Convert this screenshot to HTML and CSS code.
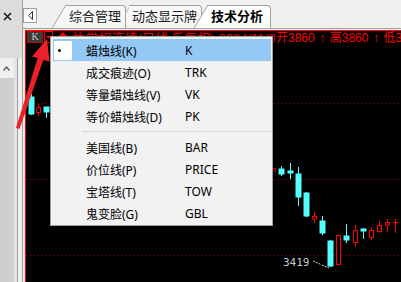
FILE: index.html
```html
<!DOCTYPE html>
<html lang="zh-CN">
<head>
    <meta charset="UTF-8">
    <title>技术分析</title>
    <link rel="stylesheet" href="styles.css">
</head>
<body>
    <div class="app">
        <aside class="side">
            <div class="side-head">
                <svg class="close-icon" width="9" height="9" viewBox="0 0 9 9"><path d="M1 1 L8 8 M8 1 L1 8" stroke="#1e1e1e" stroke-width="1.6"/></svg>
            </div>
            <div class="side-body">
                <div class="scroll">
                    <div class="scroll-btn">
                        <svg width="7" height="5" viewBox="0 0 7 5"><path d="M0.5 4.5 L3.5 1 L6.5 4.5" fill="none" stroke="#555" stroke-width="1.2"/></svg>
                    </div>
                    <div class="scroll-track"></div>
                </div>
                <div class="side-strip"></div>
                <div class="side-pad"></div>
            </div>
        </aside>

        <div class="main">
            <div class="tabbar">
                <div class="nav-btn">
                    <svg width="5" height="9" viewBox="0 0 5 9"><path d="M4.5 0.5 L0.7 4.5 L4.5 8.5 Z" fill="none" stroke="#333"/></svg>
                </div>
                <div class="tabs">
                    <div class="tab tab-first">
                        <svg class="slant" width="14" height="23" viewBox="0 0 14 23"><path d="M0 23 L14 0 L14 23 Z" fill="#f8f8f8"/><path d="M0 23 L14 0" stroke="#a0a0a0"/></svg>
                        <span class="tab-label">综合管理</span>
                    </div>
                    <div class="tab tab-second">
                        <svg class="slant" width="14" height="23" viewBox="0 0 14 23"><path d="M0 23 L14 0 L14 23 Z" fill="#f8f8f8"/><path d="M0 23 L14 0" stroke="#a0a0a0"/></svg>
                        <span class="tab-label">动态显示牌</span>
                    </div>
                    <div class="tab tab-active">
                        <svg class="slant" width="14" height="23" viewBox="0 0 14 23"><path d="M0 23 L14 0 L14 23 Z" fill="#fff"/><path d="M0 23 L14 0" stroke="#a0a0a0"/></svg>
                        <span class="tab-label">技术分析</span>
                    </div>
                </div>
            </div>

            <div class="chart">
                <div class="chart-head">
                    <span class="kbox">K</span>
                    <span class="drop">
                        <svg width="5" height="3" viewBox="0 0 5 3"><path d="M0 0 L5 0 L2.5 3 Z" fill="#f00"/></svg>
                    </span>
                    <span class="title">◆ 执常规连续(日线,后复权) 2024/11/05</span>
                    <span class="quote">开3860<i class="up">↑</i>高3860<i class="up">↑</i>低3860<i class="up">↑</i></span>
                </div>
                <svg class="plot" width="375" height="237" viewBox="0 0 375 237">
                    <g stroke="#b00000" stroke-dasharray="1 3">
                        <line x1="0" y1="58.5" x2="375" y2="58.5"/>
                        <line x1="0" y1="134.5" x2="375" y2="134.5"/>
                        <line x1="0" y1="210.5" x2="375" y2="210.5"/>
                    </g>
                    <!-- left side -->
                    <g stroke="#54ffff" fill="#54ffff">
                        <line x1="5.5" y1="49" x2="5.5" y2="70"/>
                        <rect x="3" y="52" width="5" height="17"/>
                        <line x1="20.5" y1="62" x2="20.5" y2="73"/>
                        <rect x="18" y="62" width="5" height="5"/>
                    </g>
                    <g stroke="#f00" fill="none">
                        <line x1="12.5" y1="59" x2="12.5" y2="71"/>
                        <rect x="10.5" y="62.5" width="4" height="5" fill="#000"/>
                    </g>
                    <!-- right side, falling -->
                    <g stroke="#54ffff" fill="#54ffff">
                        <line x1="255.5" y1="121" x2="255.5" y2="131"/>
                        <rect x="253" y="124" width="5" height="5"/>
                        <line x1="264.5" y1="118" x2="264.5" y2="134"/>
                        <rect x="262" y="126" width="5" height="2"/>
                        <line x1="272.5" y1="122" x2="272.5" y2="161"/>
                        <rect x="270" y="129" width="5" height="23"/>
                        <line x1="280.5" y1="147" x2="280.5" y2="172"/>
                        <rect x="278" y="148" width="5" height="23"/>
                        <line x1="296.5" y1="171" x2="296.5" y2="190"/>
                        <rect x="294" y="176" width="5" height="12"/>
                        <line x1="304.5" y1="195" x2="304.5" y2="222"/>
                        <rect x="302" y="196" width="5" height="25"/>
                        <line x1="320.5" y1="179" x2="320.5" y2="198"/>
                        <rect x="318" y="191" width="5" height="4"/>
                        <line x1="337.5" y1="183" x2="337.5" y2="194"/>
                        <rect x="335" y="184" width="5" height="2"/>
                    </g>
                    <g stroke="#f00" fill="#000">
                        <rect x="245.5" y="123.5" width="4" height="2.5"/>
                        <line x1="288.5" y1="167" x2="288.5" y2="178"/>
                        <rect x="286.5" y="171.5" width="4" height="2.5"/>
                        <rect x="310.5" y="190.5" width="4" height="29"/>
                        <line x1="329.5" y1="180" x2="329.5" y2="202"/>
                        <rect x="327.5" y="185.5" width="4" height="12"/>
                        <line x1="345.5" y1="183" x2="345.5" y2="195"/>
                        <rect x="343.5" y="185.5" width="4" height="7"/>
                        <line x1="353.5" y1="176" x2="353.5" y2="188"/>
                        <rect x="351.5" y="180.5" width="4" height="6"/>
                        <line x1="361.5" y1="174" x2="361.5" y2="187"/>
                        <rect x="359.5" y="177.5" width="4" height="2.5"/>
                        <line x1="369.5" y1="174" x2="369.5" y2="188"/>
                        <line x1="367" y1="177.5" x2="372" y2="177.5"/>
                    </g>
                    <text x="257" y="221" class="low-label">3419</text>
                    <path d="M287 216 L295 219.5 M296 220 L303 223" stroke="#cfcfcf" stroke-dasharray="2 1"/>
                </svg>
            </div>
        </div>

        <div class="menu">
            <div class="menu-item active">
                <span class="check"><i class="dot"></i></span>
                <span>蜡烛线(K)</span>
                <span>K</span>
            </div>
            <div class="menu-item">
                <span></span><span>成交痕迹(O)</span><span>TRK</span>
            </div>
            <div class="menu-item">
                <span></span><span>等量蜡烛线(V)</span><span>VK</span>
            </div>
            <div class="menu-item">
                <span></span><span>等价蜡烛线(D)</span><span>PK</span>
            </div>
            <div class="menu-sep"></div>
            <div class="menu-item">
                <span></span><span>美国线(B)</span><span>BAR</span>
            </div>
            <div class="menu-item">
                <span></span><span>价位线(P)</span><span>PRICE</span>
            </div>
            <div class="menu-item">
                <span></span><span>宝塔线(T)</span><span>TOW</span>
            </div>
            <div class="menu-item">
                <span></span><span>鬼变脸(G)</span><span>GBL</span>
            </div>
        </div>

        <!-- red annotation arrow -->
        <svg class="pointer" width="60" height="135" viewBox="0 0 60 135">
            <path d="M16 128 L37.7 58 L32 56.5 L47 39 L49.5 61.5 L43.3 60 L19.5 129 Z" fill="#ec2128"/>
        </svg>
    </div>
</body>
</html>
```

FILE: styles.css
```css
body {
    margin: 0;
    font-family: "Noto Sans", "Noto Sans CJK SC", sans-serif;
    background: #f0f0f0;
    overflow: hidden;
}
.app {
    position: relative;
    display: flex;
    width: 401px;
    height: 282px;
    overflow: hidden;
}
/* left panel */
.side {
    width: 22px;
    border-right: 1px solid #a0a0a0;
    display: flex;
    flex-direction: column;
    background: #dcdcdc;
}
.side-head {
    height: 46px;
    padding: 12px 0 0 3px;
}
.close-icon {
    display: block;
}
.side-body {
    flex: 1;
    display: flex;
}
.scroll {
    width: 14px;
    display: flex;
    flex-direction: column;
    background: #cfcfcf;
}
.scroll-btn {
    height: 20px;
    background: #f0f0f0;
    display: flex;
    align-items: center;
    padding-left: 3px;
}
.scroll-btn svg {
    display: block;
}
.side-strip {
    width: 3px;
    background: #e4e4e4;
    border-right: 1px solid #a0a0a0;
}
.side-pad {
    width: 4px;
    background: #f0f0f0;
}
/* main */
.main {
    flex: 1;
    min-width: 0;
    display: flex;
    flex-direction: column;
    background: #f0f0f0;
}
.tabbar {
    height: 28px;
    border-bottom: 1px solid #a0a0a0;
    margin-bottom: 1px;
    display: flex;
    align-items: flex-start;
}
.nav-btn {
    width: 12px;
    height: 13px;
    margin-top: 8px;
    border: 1px solid #a0a0a0;
    background: #fff;
    display: flex;
    align-items: center;
    justify-content: center;
}
.nav-btn svg {
    display: block;
}
.tabs {
    display: flex;
    align-self: flex-end;
    height: 23px;
}
.tab {
    display: flex;
    position: relative;
}
.slant {
    display: block;
}
.tab-label {
    height: 22px;
    line-height: 21px;
    padding: 0 4px 0 3px;
    font-size: 13px;
    color: #1a1a1a;
    background: #f8f8f8;
    border-top: 1px solid #a0a0a0;
    border-right: 1px solid #a0a0a0;
    border-top-right-radius: 4px;
    white-space: nowrap;
}
.tab-first {
    margin-left: 15px;
    z-index: 2;
}
.tab-second {
    margin-left: -8px;
    z-index: 1;
    width: 84px;
    overflow: hidden;
}
.tab-active {
    margin-left: -8px;
    z-index: 3;
}
.tab-active .tab-label {
    background: #fff;
    font-weight: bold;
    color: #000;
    padding-right: 7px;
}
/* chart */
.chart {
    flex: 1;
    margin-left: 2px;
    background: #000;
    border-top: 1px solid #f00;
    border-left: 1px solid #f00;
    display: flex;
    flex-direction: column;
    overflow: hidden;
}
.chart-head {
    height: 14px;
    display: flex;
    align-items: flex-start;
    color: #f00;
    font-family: "Liberation Sans", "Noto Sans CJK SC", sans-serif;
    font-size: 12px;
    line-height: 15px;
    white-space: nowrap;
    overflow: hidden;
}
.kbox {
    flex: none;
    width: 14px;
    height: 10px;
    margin-left: 1px;
    border: 1px solid #c00000;
    background: #3c3c3c;
    color: #c8c8c8;
    font: 10px "Liberation Serif", serif;
    line-height: 10px;
    text-align: center;
}
.drop {
    flex: none;
    width: 7px;
    height: 10px;
    margin-left: 1px;
    border: 1px solid #f00;
    display: flex;
    align-items: center;
    justify-content: center;
}
.drop svg {
    display: block;
}
.title {
    flex: none;
    width: 219px;
    margin-left: 3px;
    overflow: hidden;
    font-size: 13px;
}
.quote {
    flex: none;
    padding-left: 1px;
}
.up {
    font-style: normal;
    display: inline-block;
    width: 15px;
    text-align: center;
}
.plot {
    display: block;
    flex: none;
}
.low-label {
    font: 11px "DejaVu Sans Mono", monospace;
    fill: #c8c8c8;
}
/* popup menu */
.menu {
    position: absolute;
    left: 50px;
    top: 36px;
    width: 223px;
    box-sizing: border-box;
    padding: 2px 1px 1px 2px;
    background: #f2f2f2;
    border: 1px solid #a0a0a0;
    box-shadow: 2px 2px 2px rgba(0, 0, 0, 0.35);
    font-size: 12px;
    color: #000;
}
.menu-item {
    display: grid;
    grid-template-columns: 33px 99px 1fr;
    align-items: center;
    height: 22px;
    padding-top: 1px;
    box-sizing: border-box;
    white-space: nowrap;
}
.menu-item.active {
    background: #94c8f5;
}
.check {
    width: 18px;
    height: 19px;
    margin-left: 1px;
    background: #fff;
    display: flex;
    align-items: center;
    padding-left: 4px;
    box-sizing: border-box;
}
.dot {
    width: 3px;
    height: 3px;
    border-radius: 50%;
    background: #000;
}
.menu-sep {
    height: 9px;
    margin-left: 29px;
    display: flex;
    align-items: center;
}
.menu-sep::after {
    content: "";
    flex: 1;
    height: 1px;
    background: #d4d4d4;
}
.pointer {
    position: absolute;
    left: 0;
    top: 0;
}
```
